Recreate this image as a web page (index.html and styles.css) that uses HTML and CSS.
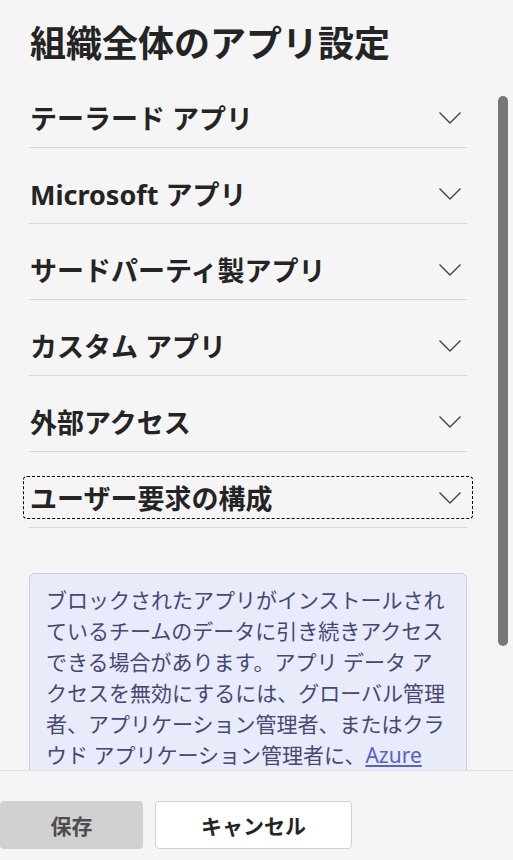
FILE: index.html
```html
<!DOCTYPE html>
<html lang="ja">
<head>
  <meta charset="UTF-8">
  <title>組織全体のアプリ設定</title>
  <link rel="stylesheet" href="styles.css">
</head>
<body>
  <div class="panel">
    <div class="scroll-area">
      <div class="content">
        <h1>組織全体のアプリ設定</h1>

        <!-- Settings sections -->
        <div class="section">
          <button class="section-btn">
            <span>テーラード アプリ</span>
            <svg class="chevron" width="24" height="14" viewBox="0 0 24 14"><path d="M1.5 1.5 L12 12 L22.5 1.5" /></svg>
          </button>
        </div>
        <div class="section">
          <button class="section-btn">
            <span>Microsoft アプリ</span>
            <svg class="chevron" width="24" height="14" viewBox="0 0 24 14"><path d="M1.5 1.5 L12 12 L22.5 1.5" /></svg>
          </button>
        </div>
        <div class="section">
          <button class="section-btn">
            <span>サードパーティ製アプリ</span>
            <svg class="chevron" width="24" height="14" viewBox="0 0 24 14"><path d="M1.5 1.5 L12 12 L22.5 1.5" /></svg>
          </button>
        </div>
        <div class="section">
          <button class="section-btn">
            <span>カスタム アプリ</span>
            <svg class="chevron" width="24" height="14" viewBox="0 0 24 14"><path d="M1.5 1.5 L12 12 L22.5 1.5" /></svg>
          </button>
        </div>
        <div class="section">
          <button class="section-btn">
            <span>外部アクセス</span>
            <svg class="chevron" width="24" height="14" viewBox="0 0 24 14"><path d="M1.5 1.5 L12 12 L22.5 1.5" /></svg>
          </button>
        </div>
        <div class="section">
          <button class="section-btn focused">
            <span>ユーザー要求の構成</span>
            <svg class="chevron" width="24" height="14" viewBox="0 0 24 14"><path d="M1.5 1.5 L12 12 L22.5 1.5" /></svg>
          </button>
        </div>

        <!-- Info message -->
        <div class="info-box">
          ブロックされたアプリがインストールされているチームのデータに引き続きアクセスできる場合があります。アプリ データ アクセスを無効にするには、グローバル管理者、アプリケーション管理者、またはクラウド アプリケーション管理者に、<a href="#">Azure Active Directory</a> でアプリを削除するよう依頼してください。
        </div>
      </div>
      <div class="scroll-thumb"></div>
    </div>

    <div class="footer">
      <button class="btn btn-save">保存</button>
      <button class="btn btn-cancel">キャンセル</button>
    </div>
  </div>
</body>
</html>
```

FILE: styles.css
```css
body, h1, p {
  margin: 0;
  padding: 0;
}

*, *::before, *::after {
  box-sizing: border-box;
}

body {
  font-family: "Noto Sans", "Noto Sans CJK JP", sans-serif;
  background-color: #f5f5f5;
  color: #242424;
}

.panel {
  width: 513px;
  height: 860px;
  display: flex;
  flex-direction: column;
}

.scroll-area {
  height: 770px;
  overflow: hidden;
  position: relative;
}

.content {
  padding: 0 46px 0 29px;
}

h1 {
  font-size: 36px;
  font-weight: 700;
  line-height: 44px;
  padding: 22px 0 0 1px;
  height: 72px;
}

/* Section rows */
.section {
  padding: 24px 0 8px;
  border-bottom: 1px solid #d6d6d6;
}

.section-btn {
  display: flex;
  align-items: center;
  justify-content: space-between;
  width: calc(100% + 12px);
  height: 43px;
  margin: 0 -6px 0 -6px;
  padding: 0 10px 0 6px;
  border: 1px solid transparent;
  border-radius: 4px;
  background: none;
  font-family: inherit;
  font-size: 27px;
  font-weight: 700;
  color: #242424;
  cursor: pointer;
}

.section-btn.focused {
  border: 1px dashed #000;
}

.chevron {
  fill: none;
  stroke: #424242;
  stroke-width: 1.4;
}

/* Info box */
.info-box {
  margin-top: 45px;
  padding: 11px 16px 16px 16px;
  background-color: #e8ebfa;
  border: 1px solid #c5cbf7;
  border-radius: 6px;
  font-size: 21px;
  line-height: 31px;
  color: #464775;
}

.info-box a {
  color: #5b5fc7;
}

.scroll-thumb {
  position: absolute;
  top: 96px;
  left: 498px;
  width: 10px;
  height: 550px;
  border-radius: 5px;
  background-color: #787878;
}

/* Footer buttons */
.footer {
  flex: 1;
  border-top: 1px solid #e0e0e0;
  display: flex;
  gap: 12px;
  padding-top: 30px;
}

.btn {
  height: 48px;
  border-radius: 4px;
  font-family: inherit;
  font-size: 21px;
  font-weight: 700;
  cursor: pointer;
}

.btn-save {
  width: 143px;
  border: none;
  background-color: #d1d1d1;
  color: #4d4d4d;
}

.btn-cancel {
  width: 197px;
  border: 1px solid #d1d1d1;
  background-color: #fff;
  color: #242424;
}
```
